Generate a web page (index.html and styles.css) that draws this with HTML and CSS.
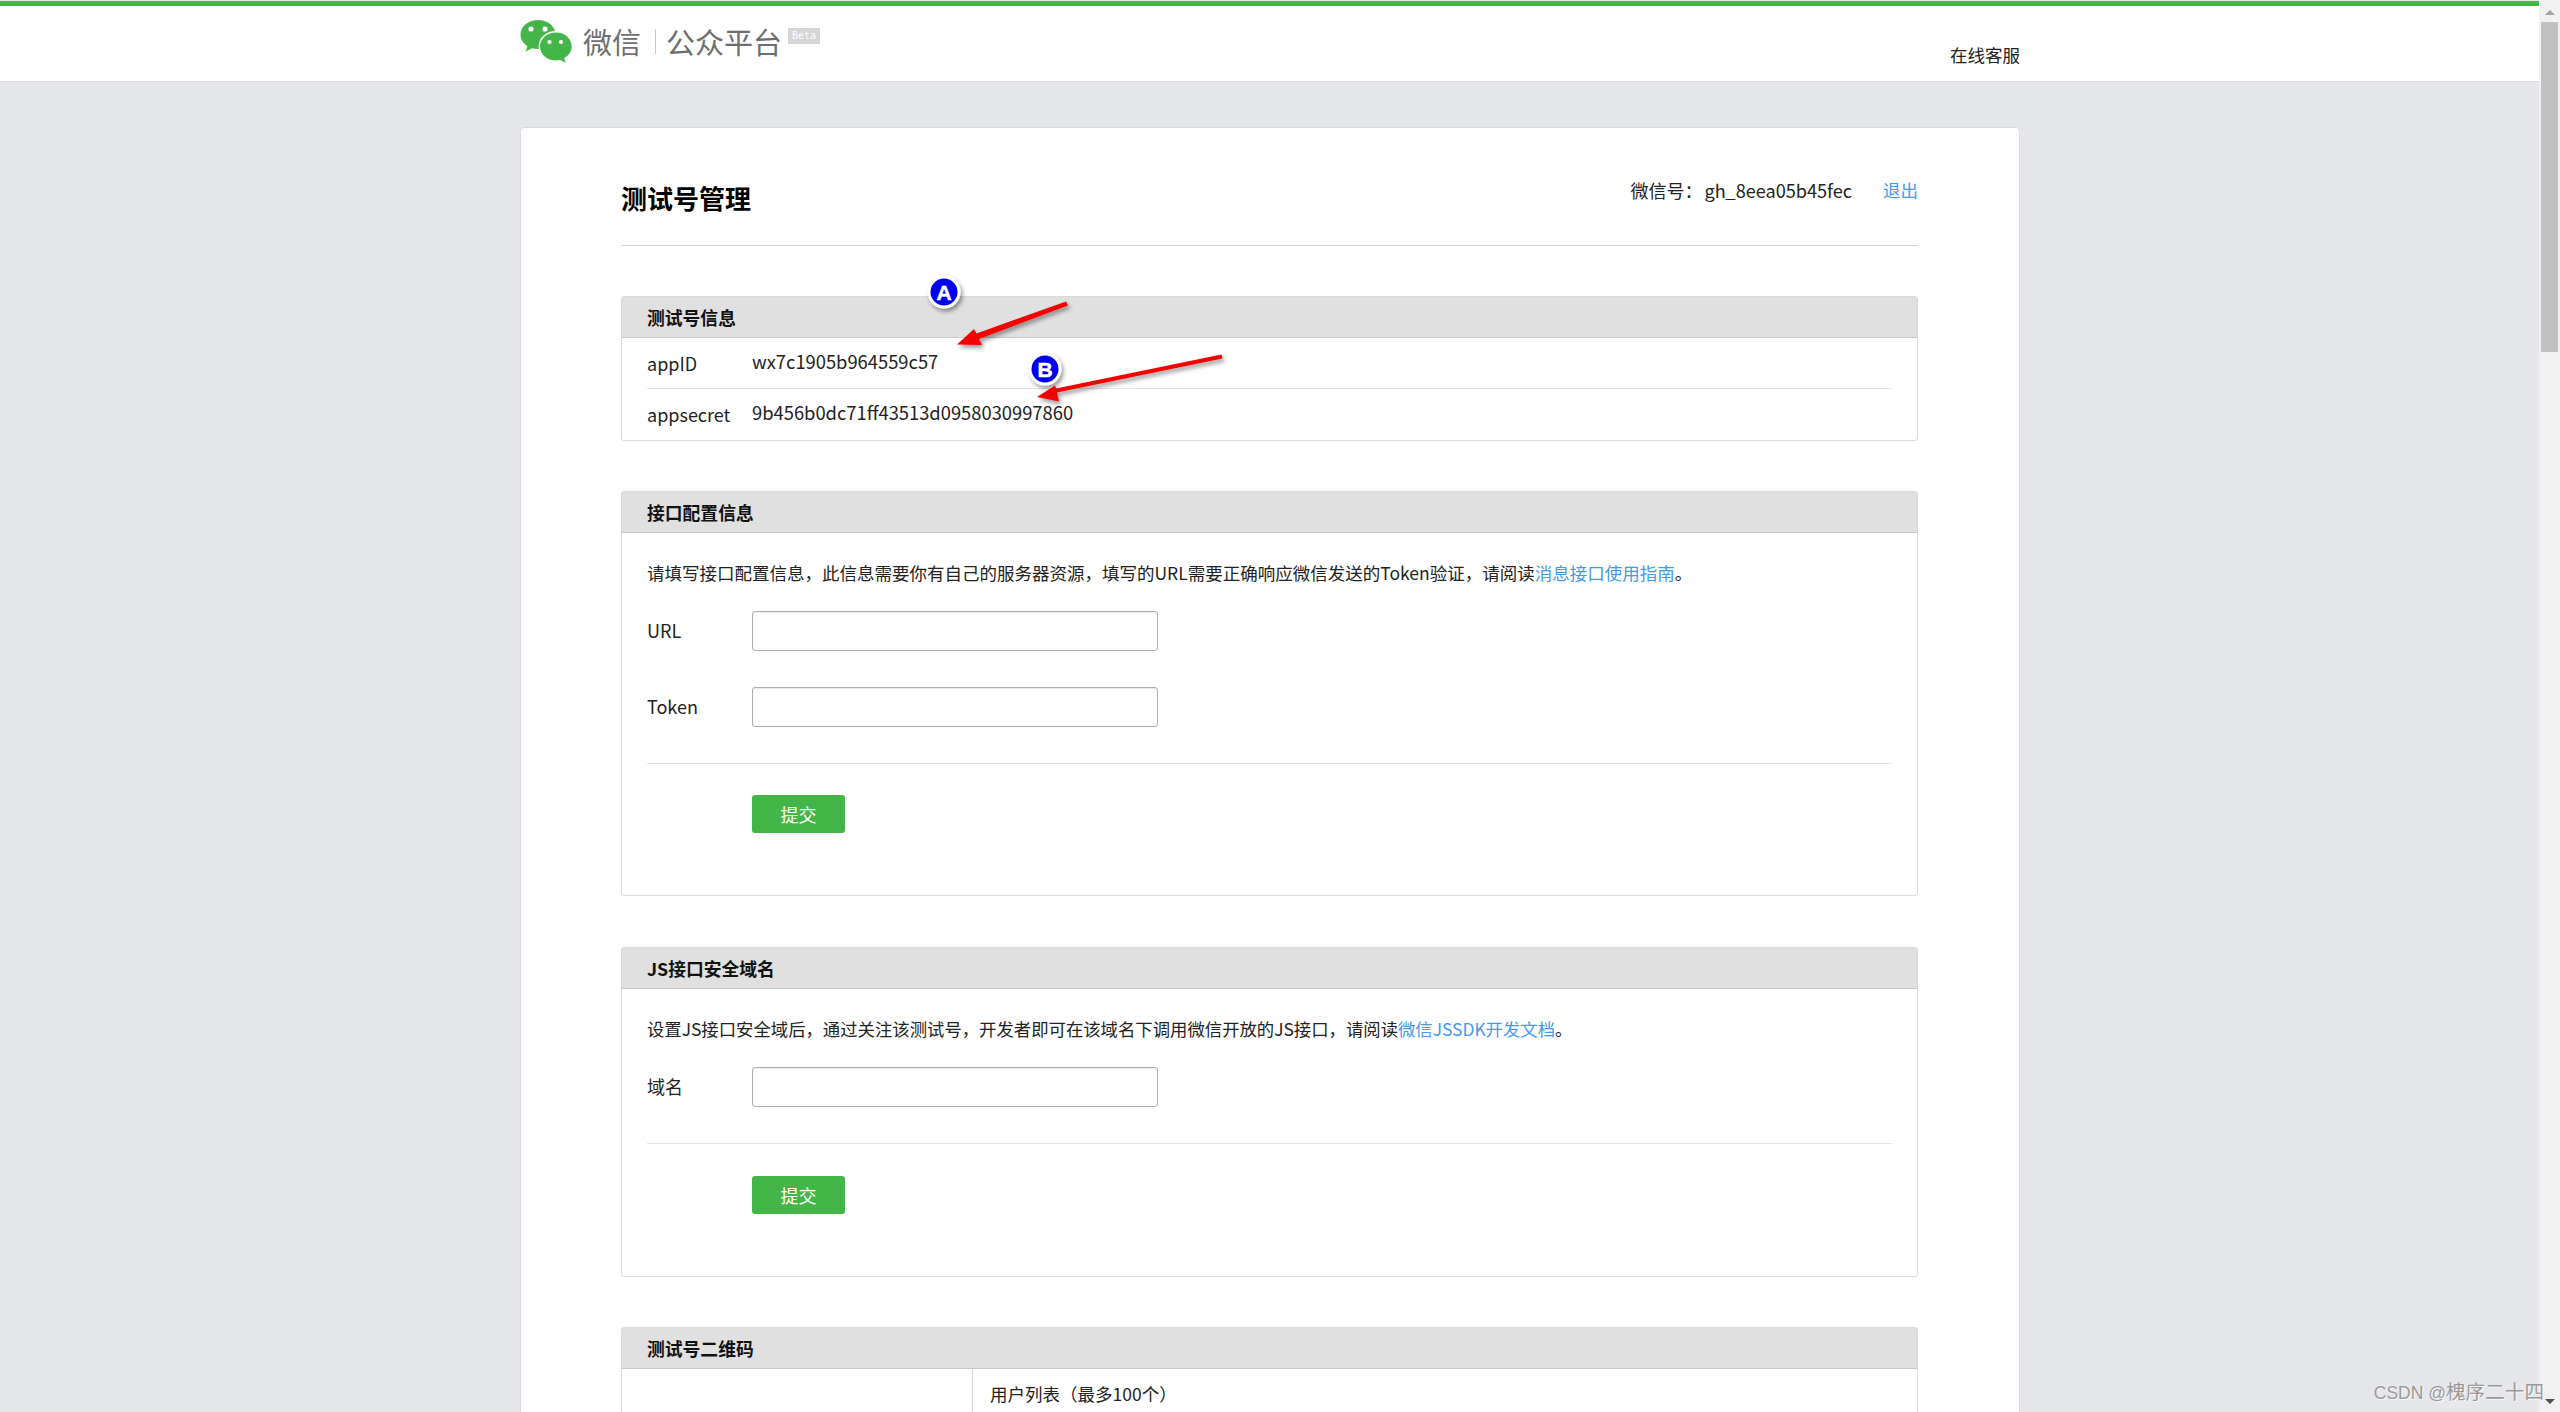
FILE: index.html
```html
<!DOCTYPE html>
<html lang="zh-CN">
<head>
<meta charset="utf-8">
<title>测试号管理</title>
<link rel="stylesheet" href="styles.css">
</head>
<body>
<div class="app">
  <div class="viewport">
    <header class="topbar">
      <svg class="logo" viewBox="0 0 52 44" width="52" height="44" aria-hidden="true">
        <path class="logo-green" d="M18 1C8.2 1 .5 7.6.5 15.6c0 4.8 2.7 8.9 6.9 11.6L5.6 32.6l6.5-3.3c1.900.5 3.800.8 5.900.8 9.800 0 17.600-6.500 17.600-14.500S27.800 1 18 1z"/>
        <ellipse class="logo-gap" cx="36" cy="27.5" rx="17.5" ry="15.6"/>
        <path class="logo-green" d="M36 13.500c-8.900 0-16 6.200-16 14s7.100 14 16 14c1.500 0 3-.2 4.400-.5l5.200 2.700-1.400-4.600c4.500-2.500 7.500-6.700 7.500-11.600 0-7.800-6.900-14-15.700-14z"/>
        <circle class="logo-eye" cx="11" cy="10" r="2.600"/>
        <circle class="logo-eye" cx="25" cy="10" r="2.600"/>
        <circle class="logo-eye" cx="29.500" cy="23" r="2.100"/>
        <circle class="logo-eye" cx="41" cy="23" r="2.100"/>
      </svg>
      <span class="brand brand-wx">微信</span>
      <span class="brand-sep"></span>
      <span class="brand brand-mp">公众平台</span>
      <span class="beta">Beta</span>
      <a class="service">在线客服</a>
    </header>

    <main class="card">
      <div class="card-head">
        <h1 class="card-title">测试号管理</h1>
        <div class="account">
          <span class="account-label">微信号：</span><span class="account-id">gh_8eea05b45fec</span><a class="link logout">退出</a>
        </div>
      </div>

      <section class="panel">
        <h2 class="panel-head">测试号信息</h2>
        <div class="panel-body">
          <div class="info-row"><span class="info-label">appID</span><span class="info-value">wx7c1905b964559c57</span></div>
          <div class="info-row"><span class="info-label">appsecret</span><span class="info-value">9b456b0dc71ff43513d0958030997860</span></div>
        </div>
      </section>

      <section class="panel">
        <h2 class="panel-head">接口配置信息</h2>
        <div class="panel-body form-body">
          <p class="desc">请填写接口配置信息，此信息需要你有自己的服务器资源，填写的URL需要正确响应微信发送的Token验证，请阅读<a class="link">消息接口使用指南</a>。</p>
          <div class="field"><label class="field-label">URL</label><input class="field-input" type="text"></div>
          <div class="field"><label class="field-label">Token</label><input class="field-input" type="text"></div>
          <div class="rule"></div>
          <button class="submit" type="button">提交</button>
        </div>
      </section>

      <section class="panel panel-js">
        <h2 class="panel-head">JS接口安全域名</h2>
        <div class="panel-body form-body">
          <p class="desc">设置JS接口安全域后，通过关注该测试号，开发者即可在该域名下调用微信开放的JS接口，请阅读<a class="link">微信JSSDK开发文档</a>。</p>
          <div class="field"><label class="field-label">域名</label><input class="field-input" type="text"></div>
          <div class="rule"></div>
          <button class="submit" type="button">提交</button>
        </div>
      </section>

      <section class="panel">
        <h2 class="panel-head">测试号二维码</h2>
        <div class="panel-body qr-body">
          <div class="qr-col"></div>
          <div class="users-col">用户列表（最多100个）</div>
        </div>
      </section>
    </main>
  </div>

  <aside class="scrollbar" aria-hidden="true">
    <span class="scroll-up"></span>
    <span class="scroll-thumb"></span>
    <span class="scroll-space"></span>
    <span class="scroll-down"></span>
  </aside>

  <svg class="annotations" viewBox="0 0 2560 1412" width="2560" height="1412" aria-hidden="true">
    <defs>
      <filter id="drop" x="-30%" y="-30%" width="170%" height="170%">
        <feDropShadow dx="2" dy="3" stdDeviation="2" flood-color="#000" flood-opacity="0.4"/>
      </filter>
    </defs>
    <g filter="url(#drop)">
      <polygon class="arrow" points="1066,301.500 1068,305.500 979,339 982,345 957,344.500 974,329 976.500,333.500"/>
      <polygon class="arrow" points="1221.500,354.500 1222.500,358.500 1057,392.500 1059,401.500 1037,397 1055,385.500 1056,388.500"/>
      <circle class="badge-ring" cx="944" cy="292" r="16.500"/>
      <circle class="badge-ring" cx="1045" cy="369" r="16.500"/>
    </g>
    <circle class="badge-fill" cx="944" cy="292" r="13.500"/>
    <circle class="badge-fill" cx="1045" cy="369" r="13.500"/>
    <text class="badge-text" x="944" y="299.500">A</text>
    <text class="badge-text" x="1045" y="376.500">B</text>
  </svg>

  <div class="watermark">CSDN @<span class="watermark-name">槐序二十四</span></div>
</div>
</body>
</html>
```
FILE: styles.css
```css
* { box-sizing: border-box; }

html, body {
  margin: 0;
  padding: 0;
  height: 100%;
  overflow: hidden;
}

body {
  font-family: "Noto Sans CJK SC", "Noto Sans", sans-serif;
  font-size: 18px;
  line-height: 28px;
  color: #222;
  background: #e6e7eb;
}

.app {
  position: relative;
  display: flex;
  width: 2560px;
  height: 1412px;
  overflow: hidden;
}

.viewport {
  flex: 1;
  min-width: 0;
  height: 100%;
  padding-top: 1px;
  background: #e6e7eb;
  overflow: hidden;
}

/* top bar */
.topbar {
  display: flex;
  align-items: center;
  height: 81px;
  padding: 0 519px 0 520px;
  background: #fff;
  border-top: 5px solid #44b549;
  border-bottom: 1px solid #d9dadc;
}

.logo { flex: none; margin-bottom: 6px; }
.logo-green { fill: #44b549; }
.logo-gap { fill: #fff; }
.logo-eye { fill: #fff; }

.brand {
  margin-bottom: 5px;
  font-size: 29px;
  line-height: 36px;
  color: #6e6e6e;
}
.brand-wx { margin-left: 11px; }
.brand-sep {
  width: 1px;
  height: 25px;
  margin: 0 10px 5px 14px;
  background: #c8c8c8;
}
.beta {
  margin: 0 0 16px 6px;
  padding: 0 4px;
  height: 16px;
  font-family: "DejaVu Sans Mono", monospace;
  font-size: 10px;
  line-height: 16px;
  color: #fff;
  background: #d5d5d5;
}
.service {
  margin-left: auto;
  align-self: flex-end;
  margin-bottom: 12px;
  font-size: 17.5px;
  color: #222;
}

/* card */
.card {
  width: 1500px;
  height: 1600px;
  margin: 45px 0 0 520px;
  padding: 0 101px 0 100px;
  background: #fff;
  border: 1px solid #d9dadc;
  border-radius: 4px;
}

.card-head {
  display: flex;
  justify-content: space-between;
  align-items: flex-start;
  height: 118px;
  padding-top: 48px;
  border-bottom: 1px solid #d4d4d4;
}
.card-title {
  margin: 4px 0 0;
  font-size: 26px;
  line-height: 36px;
  font-weight: 700;
  color: #000;
}
.account { display: flex; font-size: 17.5px; }
.account-label { font-size: 18px; }
.account-id { font-size: 18.1px; margin-left: 2px; }
.logout { margin-left: 31px; }

.link { color: #459ae9; }

/* panels */
.panel {
  margin-top: 50px;
  background: #fff;
  border: 1px solid #d9dadc;
  border-radius: 3px;
}
.panel-js { margin-top: 51px; }

.panel-head {
  margin: 0;
  height: 41px;
  padding: 0 25px;
  font-size: 17.8px;
  line-height: 40px;
  font-weight: 700;
  color: #111;
  background: #e0e0e0;
  border-bottom: 1px solid #c8c8c8;
}

.panel-body { padding: 0 25px; }

.info-row {
  display: flex;
  height: 51px;
  padding-top: 9px;
  border-bottom: 1px solid #e4e4e4;
}
.info-row:last-child { border-bottom: 0; }
.info-label {
  width: 105px;
  padding-top: 2px;
}
.info-value { font-size: 18.35px; }

.form-body { padding-top: 26px; padding-bottom: 62px; }

.desc { margin: 0 0 24px; font-size: 17.5px; }
.panel-js .desc { font-size: 17.38px; }

.field {
  display: flex;
  align-items: center;
  margin-bottom: 36px;
}
.field-label { width: 105px; margin-bottom: 2px; font-size: 18px; }
.field-input {
  width: 406px;
  height: 40px;
  padding: 0 10px;
  background: #fff;
  border: 1px solid #adadad;
  border-radius: 3px;
  box-shadow: inset 0 1px 1px rgba(0, 0, 0, 0.08);
  outline: none;
}

.rule {
  height: 1px;
  margin: 1px 0 31px;
  background: #e4e4e4;
}
.panel-js .rule { margin: 0 0 32px; }

.submit {
  display: block;
  width: 93px;
  height: 38px;
  margin-left: 105px;
  padding: 0;
  font: inherit;
  color: #fff;
  background: #44b549;
  border: 0;
  border-radius: 3px;
}

.qr-body {
  display: flex;
  height: 400px;
  padding: 0;
}
.qr-col { width: 350px; }
.users-col {
  flex: 1;
  padding: 11px 0 0 17px;
  font-size: 17.5px;
  border-left: 1px solid #d4d4d4;
}

/* scrollbar */
.scrollbar {
  display: flex;
  flex: none;
  flex-direction: column;
  align-items: center;
  width: 21px;
  height: 100%;
  background: #f1f1f1;
}
.scroll-up {
  flex: none;
  width: 0;
  height: 0;
  margin: 10px 0 7px;
  border-left: 5px solid transparent;
  border-right: 5px solid transparent;
  border-bottom: 5px solid #a3a3a3;
}
.scroll-thumb {
  flex: none;
  width: 17px;
  height: 330px;
  background: #c1c1c1;
}
.scroll-space { flex: 1; }
.scroll-down {
  flex: none;
  width: 0;
  height: 0;
  margin: 0 0 8px;
  border-left: 5px solid transparent;
  border-right: 5px solid transparent;
  border-top: 5px solid #505050;
}

/* overlays */
.annotations {
  position: absolute;
  left: 0;
  top: 0;
  pointer-events: none;
}
.arrow { fill: #f50000; }
.badge-ring { fill: #fff; }
.badge-fill { fill: #0000f0; }
.badge-text {
  font-family: "Liberation Sans", sans-serif;
  font-size: 21px;
  font-weight: 700;
  fill: #fff;
  stroke: #fff;
  stroke-width: 0.5px;
  text-anchor: middle;
}

.watermark {
  position: absolute;
  right: 16px;
  bottom: 5px;
  font-family: "Liberation Sans", "Noto Sans CJK SC", sans-serif;
  font-size: 17.5px;
  line-height: 28px;
  color: #9a9a9a;
  text-shadow: 1px 1px 0 rgba(255, 255, 255, 0.7);
  white-space: nowrap;
}
.watermark-name { font-size: 19.6px; }
```
